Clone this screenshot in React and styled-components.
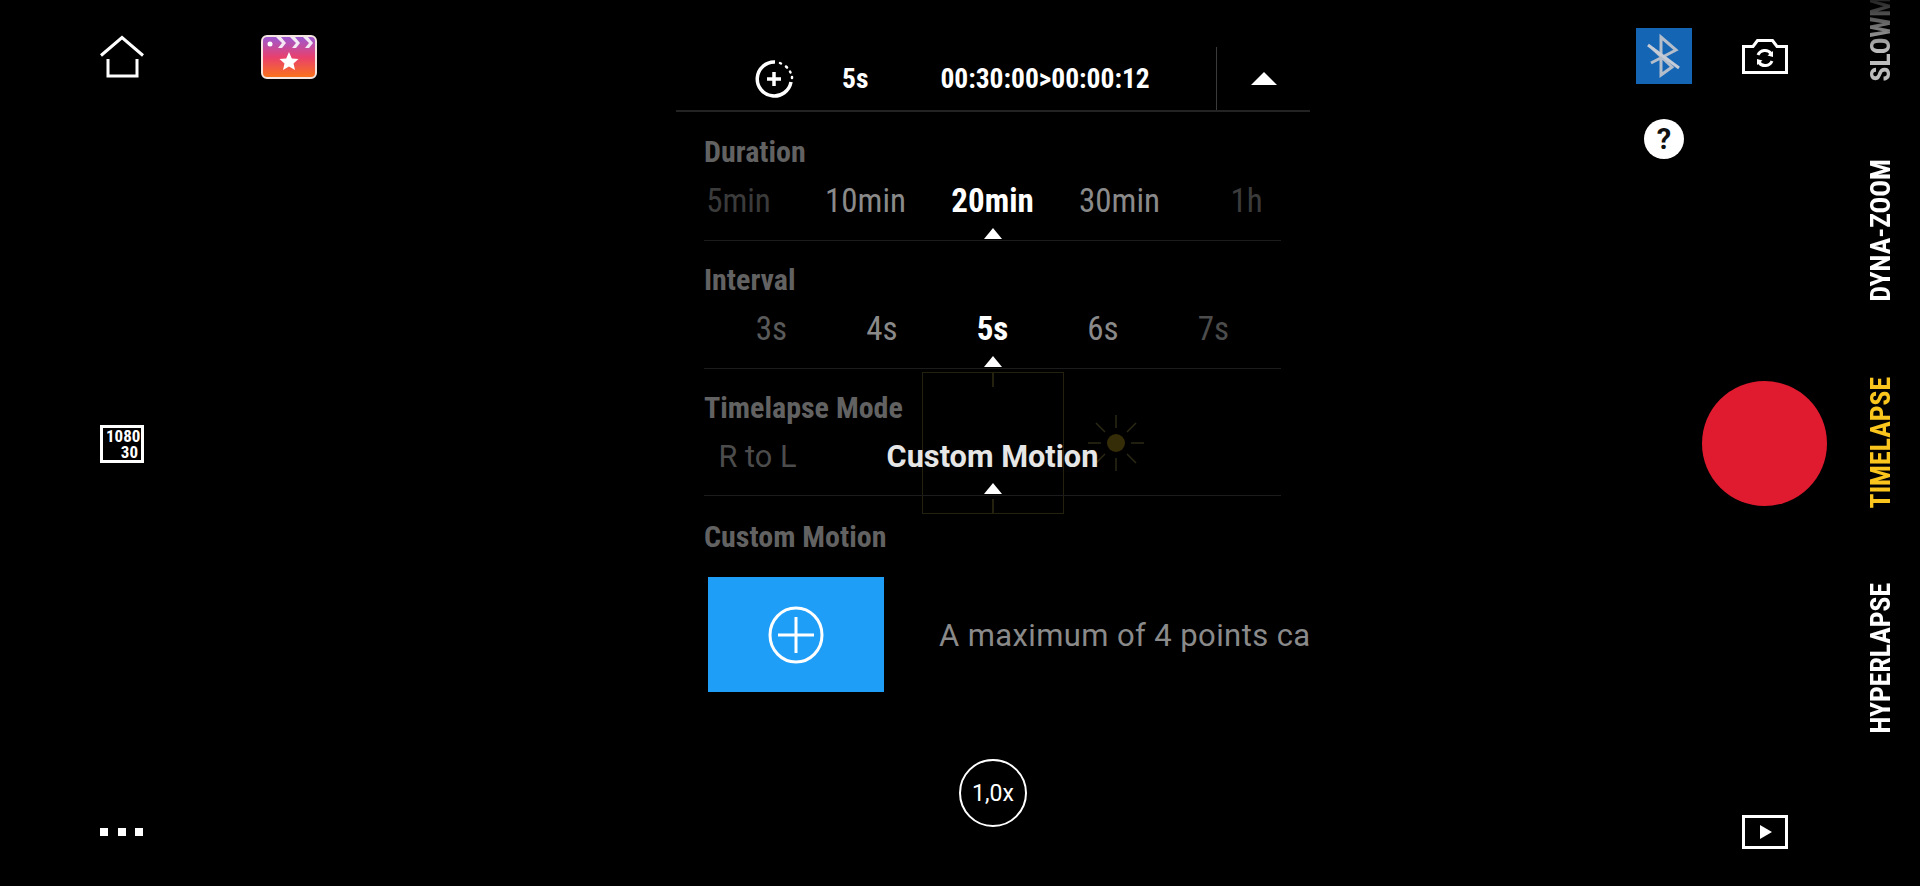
import React from "react";
import styled, { createGlobalStyle } from "styled-components";

const GlobalStyle = createGlobalStyle`
  html, body {
    margin: 0;
    background: #000;
    overflow: hidden;
  }
  * { box-sizing: border-box; }
`;

const HomeIcon = () => (
  <svg width="44" height="44" viewBox="0 0 44 44" fill="none" stroke="#fff" strokeWidth="3">
    <path d="M1 20.500 L22 2.500 L43 20.500" />
    <path d="M8 24 V41 H37 V24" />
  </svg>
);

const FilmIcon = () => (
  <svg width="56" height="44" viewBox="0 0 56 44">
    <defs>
      <linearGradient id="filmFill" x1="0" y1="0" x2="0" y2="1">
        <stop offset="0" stopColor="#9a5ad6" />
        <stop offset="0.5" stopColor="#e8406e" />
        <stop offset="1" stopColor="#fb7418" />
      </linearGradient>
    </defs>
    <rect x="1" y="1" width="54" height="42" rx="5" fill="url(#filmFill)" stroke="#f6e6e2" strokeWidth="2" />
    <circle cx="9" cy="9" r="2.500" fill="#fff" />
    <path d="M15 2 L20 2 L25 8 L21 13 L17 13 L21 8 Z" fill="#f4e8f4" />
    <path d="M29 2 L34 2 L39 8 L35 13 L31 13 L35 8 Z" fill="#f4e8f4" />
    <path d="M42 2 L47 2 L52 8 L48 13 L44 13 L48 8 Z" fill="#f4e8f4" />
    <path d="M28 17 L30.800 23.500 L37.500 24.100 L32.500 28.500 L34 35 L28 31.500 L22 35 L23.500 28.500 L18.500 24.100 L25.200 23.500 Z" fill="#fff" />
  </svg>
);

const TimerIcon = () => (
  <svg width="42" height="42" viewBox="0 0 42 42" fill="none" stroke="#fff">
    <path d="M22 4 A17 17 0 1 0 38 24" strokeWidth="3.500" />
    <path d="M27 5 L28 5.500 M33 8.500 L34 9.500 M37 13.500 L37.500 14.500 M39 19 L39 20" strokeWidth="2.500" strokeLinecap="round" />
    <path d="M21 14 V28 M14 21 H28" strokeWidth="3.500" />
  </svg>
);

const PlusCircleIcon = () => (
  <svg width="56" height="58" viewBox="0 0 56 58" fill="none" stroke="#fff" strokeWidth="3">
    <ellipse cx="28" cy="29" rx="26" ry="27" />
    <path d="M28 11 V47 M10 29 H46" />
  </svg>
);

const BluetoothOffIcon = () => (
  <svg width="56" height="56" viewBox="0 0 56 56" fill="none" stroke="#b4bdca" strokeWidth="3">
    <path d="M15 35 L40 22 L25 9 V47 L36 39 L16 20" />
    <path d="M12 17 L43 40" stroke="#c6ccd6" />
  </svg>
);

const CameraFlipIcon = () => (
  <svg width="46" height="36" viewBox="0 0 46 36" fill="none" stroke="#fff" strokeWidth="3">
    <path d="M1.500 8.500 H11 L15.500 2.500 H30.500 L35 8.500 H44.500 V34.500 H1.500 Z" />
    <path d="M16 17 A7.500 7.500 0 0 1 29 15.500" />
    <path d="M30 23 A7.500 7.500 0 0 1 17 24.500" />
    <path d="M31 13 L31 19 L25.500 17.500 Z M15 27 L15 21 L20.500 22.500 Z" fill="#fff" stroke="none" />
  </svg>
);

const PlayIcon = () => (
  <svg width="46" height="34" viewBox="0 0 46 34" fill="none">
    <rect x="1.500" y="1.500" width="43" height="31" stroke="#fff" strokeWidth="3" />
    <path d="M18 10 L30 17 L18 24 Z" fill="#fff" />
  </svg>
);

const SunIcon = () => (
  <svg width="58" height="58" viewBox="0 0 58 58" fill="none" stroke="#2b2814" strokeWidth="1.500">
    <circle cx="29" cy="29" r="9" fill="#352c08" stroke="none" />
    <path d="M29 1 V14 M29 44 V57 M1 29 H14 M44 29 H57 M9 9 L18 18 M40 40 L49 49 M49 9 L40 18 M18 40 L9 49" />
  </svg>
);

const Page = styled.div`
  display: flex;
  width: 1920px;
  height: 886px;
  padding-left: 100px;
  background: #000;
  overflow: hidden;
  font-family: Roboto, "Liberation Sans", sans-serif;
  color: #fff;
`;

const LeftRail = styled.aside`
  display: flex;
  flex-direction: column;
  align-items: flex-start;
  width: 217px;
  flex: none;
  padding: 35px 0 50px;
`;

const TopIcons = styled.div`
  display: flex;
  justify-content: space-between;
  align-items: center;
  width: 100%;
`;

const ResolutionBadge = styled.div`
  display: flex;
  flex-direction: column;
  justify-content: center;
  width: 44px;
  height: 38px;
  margin-top: 346px;
  padding: 0 3px;
  border: 3px solid #fff;
  font-size: 17px;
  font-weight: 700;
  font-stretch: 75%;
  line-height: 16px;
  text-align: right;
`;

const Dots = styled.div`
  display: flex;
  gap: 9.500px;
  margin-top: auto;

  span {
    width: 8px;
    height: 8px;
    background: #fff;
  }
`;

const CenterColumn = styled.main`
  display: flex;
  flex-direction: column;
  align-items: center;
  flex: none;
  width: 634px;
  margin-left: 359px;
  padding-top: 46px;
`;

const Panel = styled.section`
  position: relative;
  width: 100%;
  height: 659px;
  overflow: hidden;
`;

const FocusBox = styled.div`
  position: absolute;
  top: 326px;
  left: 246px;
  width: 142px;
  height: 142px;
  border: 1.5px solid #24220f;

  &::before,
  &::after {
    content: "";
    position: absolute;
    left: 69px;
    width: 1.5px;
    height: 14px;
    background: #24220f;
  }
  &::before { top: 0; }
  &::after { bottom: 0; }
`;

const SunMark = styled.div`
  position: absolute;
  top: 368px;
  left: 411px;
  display: flex;
`;

const TopBar = styled.header`
  position: relative;
  display: flex;
  align-items: center;
  height: 66px;
  padding-top: 1px;
  border-bottom: 2px solid #232323;
`;

const TimerSlot = styled.div`
  display: flex;
  margin-left: 77px;
`;

const BarValue = styled.span`
  font-size: 27.500px;
  font-weight: 700;
  font-stretch: 75%;
  margin-left: ${(p) => p.$gap}px;
`;

const Collapse = styled.div`
  display: flex;
  align-items: center;
  justify-content: center;
  margin-left: auto;
  width: 94px;
  height: 100%;
  border-left: 1px solid #3a3a3a;
`;

const Caret = styled.i`
  display: block;
  width: 0;
  height: 0;
  border-left: ${(p) => p.$w / 2}px solid transparent;
  border-right: ${(p) => p.$w / 2}px solid transparent;
  border-bottom: ${(p) => p.$h}px solid #fff;
`;

const Sections = styled.div`
  position: relative;
  z-index: 1;
  padding: 0 29px 0 28px;
`;

const Section = styled.div`
  display: flex;
  flex-direction: column;
  height: 127.500px;
  border-bottom: 1px solid #1c1c1c;

  &:first-child {
    height: 129px;
  }
`;

const SectionTitle = styled.h3`
  margin: 0;
  padding-top: ${(p) => p.$top ?? 22}px;
  font-size: 30px;
  line-height: 34px;
  font-weight: 700;
  font-stretch: 75%;
  color: #626262;
`;

const Options = styled.div`
  display: grid;
  flex: 1;
  grid-template-columns: repeat(${(p) => p.$count}, ${(p) => p.$cell}px);
  justify-content: center;
  margin-top: 13px;
`;

const Option = styled.div`
  display: flex;
  flex-direction: column;
  align-items: center;
  font-size: ${(p) => (p.$wide ? 30.7 : 33)}px;
  line-height: 38px;
  white-space: nowrap;
  font-weight: ${(p) => (p.$active ? 700 : 400)};
  font-stretch: ${(p) => (p.$wide ? "100%" : "85%")};
  color: ${(p) => p.$color};

  ${Caret} {
    margin-top: auto;
    margin-bottom: 1px;
  }
`;

const MotionRow = styled.div`
  display: flex;
  align-items: center;
  margin: 23px 0 0 4px;
`;

const AddPoint = styled.button`
  display: flex;
  align-items: center;
  justify-content: center;
  flex: none;
  width: 176px;
  height: 115px;
  padding: 0;
  border: none;
  background: #1f9ef8;
`;

const Hint = styled.p`
  margin: 2px 0 0 55px;
  font-size: 31px;
  letter-spacing: 0.400px;
  white-space: nowrap;
  color: #8a8a8a;
`;

const ZoomButton = styled.div`
  display: flex;
  align-items: center;
  justify-content: center;
  flex: none;
  width: 68px;
  height: 68px;
  margin-top: 54px;
  border: 2px solid #fff;
  border-radius: 50%;
  font-size: 23px;
`;

const BluetoothColumn = styled.div`
  display: flex;
  flex-direction: column;
  align-items: center;
  flex: none;
  width: 56px;
  margin-left: 326px;
  padding-top: 28px;
`;

const BluetoothTile = styled.div`
  display: flex;
  width: 56px;
  height: 56px;
  background: #1565b5;
`;

const HelpBadge = styled.div`
  display: flex;
  align-items: center;
  justify-content: center;
  width: 40px;
  height: 40px;
  margin-top: 35px;
  border-radius: 50%;
  background: #fff;
  color: #111;
  font-size: 29px;
  font-weight: 700;
`;

const CaptureColumn = styled.div`
  display: flex;
  flex-direction: column;
  align-items: center;
  flex: none;
  width: 124px;
  margin-left: 11px;
  padding: 38px 0 37px;
`;

const RecordButton = styled.div`
  flex: none;
  width: 125px;
  height: 125px;
  margin: 307px 2px 0 0;
  border-radius: 50%;
  background: #e01b30;
`;

const PlaySlot = styled.div`
  display: flex;
  margin-top: auto;
`;

const ModeRail = styled.nav`
  display: flex;
  flex-direction: column;
  justify-content: flex-end;
  align-items: center;
  flex: none;
  gap: 75px;
  width: 30px;
  height: 886px;
  margin-left: 39px;
  padding-bottom: 152px;
  overflow: hidden;
`;

const Mode = styled.span`
  flex: none;
  writing-mode: vertical-rl;
  transform: rotate(180deg);
  font-size: 27.700px;
  line-height: 30px;
  font-weight: 700;
  font-stretch: 75%;
  white-space: nowrap;
  color: ${(p) => p.$color || "#fff"};
`;

const FadedMode = styled(Mode)`
  margin-bottom: 3px;
  -webkit-mask-image: linear-gradient(to bottom, #000 30px, rgba(0, 0, 0, 0.15) 84px);
  mask-image: linear-gradient(to bottom, #000 30px, rgba(0, 0, 0, 0.15) 84px);
`;

const durations = [
  { label: "5min", color: "#3b3b3b" },
  { label: "10min", color: "#8a8a8a" },
  { label: "20min", color: "#fff", active: true },
  { label: "30min", color: "#8a8a8a" },
  { label: "1h", color: "#3b3b3b" },
];

const intervals = [
  { label: "3s", color: "#5a5a5a" },
  { label: "4s", color: "#8a8a8a" },
  { label: "5s", color: "#fff", active: true },
  { label: "6s", color: "#8a8a8a" },
  { label: "7s", color: "#4c4c4c" },
];

const motionModes = [
  { label: "R to L", color: "#4c4c4c", wide: true },
  { label: "Custom Motion", color: "#e6e6e6", active: true, wide: true },
  { label: "", color: "#000" },
];

const OptionRow = ({ items, cell }) => (
  <Options $count={items.length} $cell={cell}>
    {items.map((item) => (
      <Option key={item.label} $active={item.active} $color={item.color} $wide={item.wide}>
        {item.label}
        {item.active && <Caret $w={18} $h={11} />}
      </Option>
    ))}
  </Options>
);

const App = () => {
  return (
    <Page>
      <GlobalStyle />

      <LeftRail>
        <TopIcons>
          <HomeIcon />
          <FilmIcon />
        </TopIcons>
        <ResolutionBadge>
          <span>1080</span>
          <span>30</span>
        </ResolutionBadge>
        <Dots>
          <span />
          <span />
          <span />
        </Dots>
      </LeftRail>

      <CenterColumn>
        <Panel>
          <FocusBox />
          <SunMark>
            <SunIcon />
          </SunMark>
          <TopBar>
            <TimerSlot>
              <TimerIcon />
            </TimerSlot>
            <BarValue $gap={47}>5s</BarValue>
            <BarValue $gap={72}>00:30:00&gt;00:00:12</BarValue>
            <Collapse>
              <Caret $w={27} $h={13} />
            </Collapse>
          </TopBar>
          <Sections>
            <Section>
              <SectionTitle $top={23}>Duration</SectionTitle>
              <OptionRow items={durations} cell={127} />
            </Section>
            <Section>
              <SectionTitle>Interval</SectionTitle>
              <OptionRow items={intervals} cell={110.5} />
            </Section>
            <Section>
              <SectionTitle>Timelapse Mode</SectionTitle>
              <OptionRow items={motionModes} cell={235} />
            </Section>
            <SectionTitle $top={24}>Custom Motion</SectionTitle>
            <MotionRow>
              <AddPoint aria-label="Add point">
                <PlusCircleIcon />
              </AddPoint>
              <Hint>A maximum of 4 points can be set</Hint>
            </MotionRow>
          </Sections>
        </Panel>
        <ZoomButton>1,0x</ZoomButton>
      </CenterColumn>

      <BluetoothColumn>
        <BluetoothTile>
          <BluetoothOffIcon />
        </BluetoothTile>
        <HelpBadge>?</HelpBadge>
      </BluetoothColumn>

      <CaptureColumn>
        <CameraFlipIcon />
        <RecordButton />
        <PlaySlot>
          <PlayIcon />
        </PlaySlot>
      </CaptureColumn>

      <ModeRail>
        <FadedMode $color="#bdbdbd">SLOWMOTION</FadedMode>
        <Mode>DYNA-ZOOM</Mode>
        <Mode $color="#fac51c">TIMELAPSE</Mode>
        <Mode>HYPERLAPSE</Mode>
      </ModeRail>
    </Page>
  );
};

export default App;
